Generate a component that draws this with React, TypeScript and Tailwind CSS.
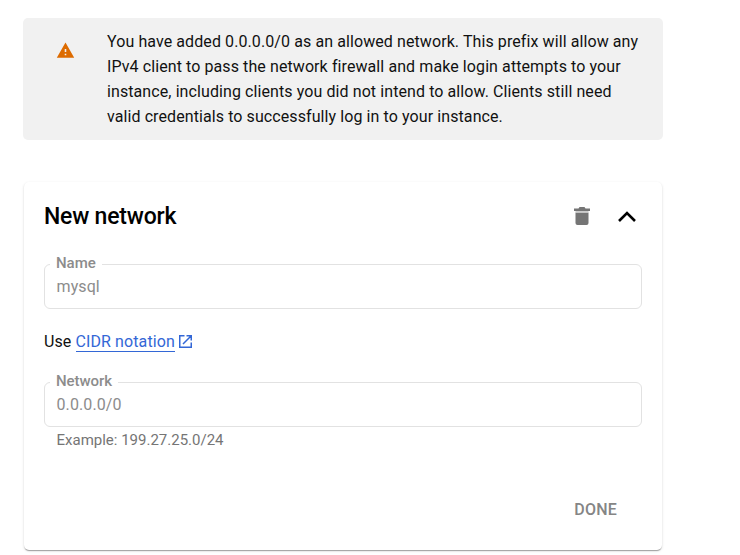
function Field({ label, value }: { label: string; value: string }) {
  return (
    <div className="relative flex h-[45px] items-center rounded-md border border-[#e2e2e2] px-[11.5px] text-[#8c8c8c]">
      <span className="absolute -top-3 left-[5px] bg-white px-1.5 text-[15px] font-medium leading-5 tracking-[-0.05px]">{label}</span>
      <span className="leading-6 tracking-[0.1px]">{value}</span>
    </div>
  );
}

export default function App() {
  return (
    <main className="h-[555px] w-[740px] overflow-hidden bg-white pl-[23px] pt-[18px] font-['Roboto',sans-serif] text-base text-[#111111]">
      <section className="flex h-[122px] w-[640px] rounded-[5px] bg-[#f1f1f1] pt-[11px]">
        <svg className="ml-[33px] mt-3 size-[19px] shrink-0" viewBox="0 0 24 24" fill="#dd6b00"><path d="M1 21h22L12 2 1 21zm12-3h-2v-2h2v2zm0-4h-2v-4h2v4z" /></svg>
        <p className="ml-8 whitespace-nowrap leading-[25px] tracking-[0.09px]">
          You have added 0.0.0.0/0 as an allowed network. This prefix will allow any<br />
          IPv4 client to pass the network firewall and make login attempts to your<br />
          instance, including clients you did not intend to allow. Clients still need<br />
          valid credentials to successfully log in to your instance.
        </p>
      </section>
      <section className="ml-px mt-[42px] h-[368px] w-[638px] rounded-[5px] bg-white px-5 shadow-[0_2px_1px_-1px_rgba(0,0,0,0.2),0_1px_1px_0_rgba(0,0,0,0.14),0_1px_3px_0_rgba(0,0,0,0.12)]">
        <header className="flex h-[82px] items-start pt-[18px]">
          <h2 className="text-[23px] font-medium leading-[34px] tracking-[-0.2px] text-black">New network</h2>
          <svg className="ml-auto mt-[7px] h-[19px] w-4" viewBox="0 0 16 19">
            <path d="M5.5 0h5l1 1.5H16V4H0V1.5h4.5z" fill="#757575" />
            <path d="M1.5 5.5h13V16a2 2 0 0 1-2 2h-9a2 2 0 0 1-2-2z" fill="#757575" />
            <path d="M1.5 4h13v1.5h-13z" fill="#cccccc" />
          </svg>
          <svg className="ml-7 mr-1.5 mt-[11px] h-3 w-[18px]" viewBox="0 0 18 12" fill="none" stroke="black" strokeWidth="2.6"><path d="M1 10l8-8 8 8" /></svg>
        </header>
        <Field label="Name" value="mysql" />
        <p className="mt-[21px] flex h-6 items-start leading-[23px] tracking-[0.1px]">
          Use&nbsp;
          <a className="h-[22px] border-b border-[#3367d6] text-[#3367d6]">CIDR notation</a>
          <svg className="ml-1 mt-[5px] size-[13px]" viewBox="0 0 13 13" fill="none" stroke="#3367d6" strokeWidth="1.5"><path d="M5.5.75H.75v11.5h11.5V7.5M7.5.75h4.75V5.5M12.25.75L4 9" /></svg>
        </p>
        <div className="mt-7">
          <Field label="Network" value="0.0.0.0/0" />
        </div>
        <p className="ml-[12.5px] mt-[3px] text-[15px] leading-5 text-[#757575]">Example: 199.27.25.0/24</p>
        <div className="mt-12 flex justify-end pr-[25px]">
          <button className="font-medium leading-6 tracking-[0.2px] text-[#858585]">DONE</button>
        </div>
      </section>
    </main>
  );
}
